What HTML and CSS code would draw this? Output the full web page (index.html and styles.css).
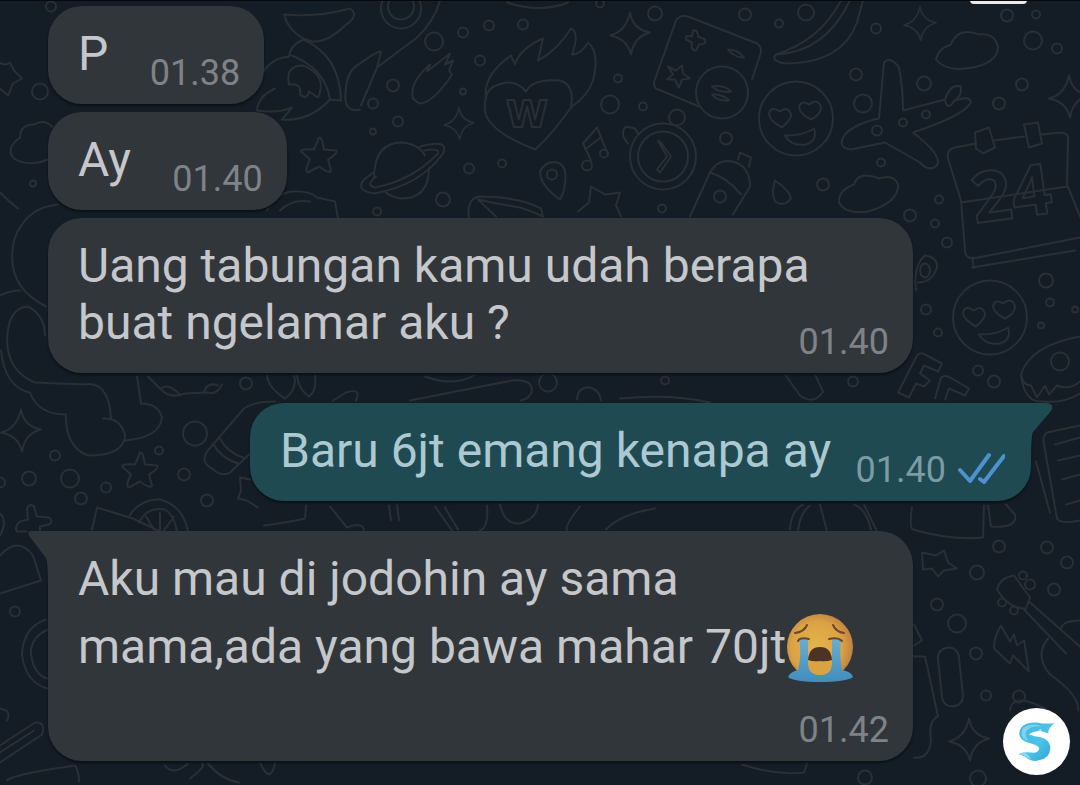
FILE: index.html
```html
<!DOCTYPE html>
<html lang="id">
<head>
<meta charset="utf-8">
<meta name="viewport" content="width=device-width, initial-scale=1">
<title>Chat</title>
<link rel="stylesheet" href="styles.css">
</head>
<body>
<svg class="wallpaper" viewBox="0 0 1080 785" preserveAspectRatio="xMidYMid slice" aria-hidden="true">
  <defs>
    <path id="star" d="M0-18 Q3-19 5-6 L17-5 Q20-3 9 4 L12 15 Q11 19 0 11 L-11 17 Q-15 16-9 4 L-18-4 Q-18-7-5-6Z"/>
    <path id="spark" d="M0-21 Q3-4 20-1 Q4 3 1 21 Q-3 5-20 2 Q-4-2 0-21Z"/>
    <g id="love">
      <circle r="37"/>
      <path d="M-14 9 Q-27 2-27-5 Q-25-13-16-7 Q-8-13-5-4 Q-4 0-14 9Z M15 1 Q3-5 3-12 Q6-19 13-14 Q22-21 25-11 Q25-4 15 1Z M-11 17 Q8 17 18 10 Q22 22 10 26 Q-5 28-11 17Z"/>
    </g>
    <g id="clock"><circle r="33"/><circle r="25"/><path d="M-5-16 L4 0 L-6 13 L-3 16 L8 0 L-2-14Z"/></g>
  </defs>
  <g class="doodles">
    <!-- top left -->
    <path d="M0 62 Q5 66 10 62 L14 70 L22 78 L13 83 L8 95 L0 88"/>
    <path d="M52 126 Q44 118 34 124 Q20 124 20 137 Q5 148 14 158 Q28 167 48 159"/>
    <path d="M0 192 Q9 201 18 208 M58 204 Q25 207 14 240 Q4 285 46 306"/>
    <path d="M284 14 Q318 17 350 8 Q360 15 345 25 Q328 42 312 41 Q290 35 284 14Z"/>
    <path d="M303 39 Q290 45 289 56 Q270 58 262 74 M303 39 Q340 55 341 100 L330 99 Q325 67 289 54 M330 99 Q310 121 282 119 L292 107 Q278 113 257 110 Q258 96 275 88 L262 96"/>
    <path d="M303 65 Q285 65 289 84 Q302 82 300 94 Q307 100 309 91 L318 97 Q328 75 303 65Z"/>
    <path d="M360 109 Q342 113 346 88 Q347 70 360 63 Q378 50 381 51 L377 67 Q402 48 416 38 Q435 20 440 0 M377 67 L361 105"/>
    <use href="#star" x="319" y="155"/>
    <path d="M267 210 Q275 193 292 191 Q310 190 317 197 L335 201 L338 218 M280 210 Q292 198 310 201"/>
    <circle cx="401" cy="8" r="20"/><circle cx="401" cy="6" r="13"/>
    <path d="M413 98 Q409 82 430 64 L427 71 L450 53 L445 64 L453 60 L449 70 L452 74 Q433 103 419 103Z M507 2 Q540 13 568 2"/>
    <use href="#spark" x="459" y="123" transform="translate(459 123) scale(.75) translate(-459 -123)"/>
    <!-- planet -->
    <path d="M374 178 Q374 142 402 142 Q418 143 425 155 M429 167 Q429 198 402 198 Q391 197 385 191"/>
    <path d="M420 146 Q450 138 443 153 Q420 185 374 193 Q355 190 364 179 L373 172 M424 150 Q440 147 438 153 Q412 180 375 187 Q365 185 376 176"/>
    <!-- burning heart -->
    <path d="M526 91 Q515 78 499 84 Q483 88 485 110 Q487 130 535 149 Q551 135 571 107 Q575 83 559 80 Q533 78 526 91Z"/>
    <path d="M486 99 Q482 75 511 55 L515 64 Q520 48 543 38 L538 60 Q557 50 571 28 Q580 32 572 54 Q581 54 588 42 Q600 52 593 80 Q588 95 572 106"/>
    <text class="doodle-heart" x="506" y="126">W</text>
    <use href="#spark" x="630" y="33"/>
    <path d="M583 143 L597 127 L608 154 M583 143 L591 160 M585 149 L601 137"/><circle cx="587" cy="165" r="5"/><circle cx="604" cy="153" r="4"/>
    <path d="M560 199 Q540 185 540 171 Q545 160 557 162 Q570 165 563 193Z"/><circle cx="552" cy="174" r="5"/>
    <path d="M469 218 Q466 200 478 196 Q520 196 541 208 L543 216 Q535 212 520 207 Q495 203 478 199 L496 216 M578 211 L589 202 L591 186 L605 194 L620 192 L616 205 L621 216"/>
    <!-- clock and calculator -->
    <use href="#clock" x="663" y="156"/><path d="M628 143 Q619 133 626 126 L635 128 L638 133"/>
    <path d="M699 106 L656 88 Q652 84 656 76 L676 20 Q680 14 688 16 L757 43 Q763 47 760 55 L752 79"/>
    <circle cx="722" cy="92" r="26"/>
    <path d="M693 30 Q698 29 698 36 L705 39 Q707 44 699 44 L696 50 Q690 50 692 42 L686 39 Q685 34 692 36Z M668 66 L676 70 L682 65 L683 73 L690 78 L682 79 L679 87 L675 79 L667 79 L673 74Z M728 49 Q738 49 744 57 Q734 57 728 49Z M712 86 Q724 84 731 91 Q720 93 712 86Z M712 94 Q722 93 729 100 Q717 101 712 94Z"/>
    <!-- banana, bottle -->
    <path d="M841 0 Q820 40 776 54 Q770 60 785 63 Q842 63 857 22 L863 0 M776 54 Q825 52 850 0"/>
    <path d="M690 216 L710 172 Q718 158 732 161 Q750 165 750 186 L733 214 M710 172 Q726 176 741 194 M738 159 L740 152 L751 157 L749 166"/><circle cx="720" cy="196" r="6"/>
    <use href="#love" x="796" y="118"/>
    <path d="M775 180 Q790 190 791 198 Q784 207 775 201 Q771 193 775 180Z"/>
    <!-- plane -->
    <path d="M879 118 L884 62 Q890 55 899 67 Q903 88 903 110 L945 99 Q950 83 961 86 Q962 97 953 101 Q970 94 971 102 Q964 115 913 132 Q943 155 937 165 Q929 172 920 162 L885 142 L851 149 Q836 147 845 134 Q855 123 879 118Z"/>
    <path d="M954 101 Q947 111 945 99"/>
    <path d="M951 44 Q938 48 936 59 Q946 72 973 67 Q997 62 998 47 Q995 32 979 34 Q958 26 951 44Z"/>
    <path d="M854 184 Q838 190 839 202 Q845 214 868 211 Q899 202 898 184 Q894 173 879 178 Q858 170 854 184Z"/>
    <use href="#spark" x="920" y="23" transform="translate(920 23) scale(.8) translate(-920 -23)"/>
    <use href="#spark" x="1069" y="96"/>
    <!-- calendar -->
    <path d="M976 143 L955 147 Q946 149 948 158 L961 200 L965 250 Q965 260 978 257 L1080 237 M994 140 L1024 136 M1041 134 L1062 132 Q1069 133 1068 140 L1067 184 L1080 216 M961 202 L1067 186 M972 267 L1075 250 M974 267 Q972 260 973 257"/>
    <path d="M975 132 L989 127 L995 147 L983 153 L976 148Z M1024 124 L1038 122 L1042 143 L1029 147Z"/>
    <text class="doodle-date" x="975" y="223" transform="rotate(-8 975 223)">24</text>
    <!-- right middle -->
    <path d="M916 290 Q913 265 925 255 Q938 257 937 267 Q932 282 918 282"/><ellipse cx="925" cy="270" rx="5" ry="7"/>
    <use href="#love" x="990" y="317"/>
    <path d="M1080 336 Q1030 345 1021 374 Q1023 385 1031 385 L1037 397 L1045 385 L1049 394 L1057 385 Q1070 390 1080 381 M1021 374 Q1024 402 1042 401 Q1064 403 1080 393"/><circle cx="1060" cy="361" r="9"/>
    <path d="M898 392 L917 355 Q920 351 925 354 L942 363 L938 371 L924 365 L920 373 L930 380 L924 386 L916 383 L909 397Z M935 398 L941 377 Q945 374 950 377 L969 388 L965 395 L949 388 L945 399"/>
    <path d="M1080 425 L1047 432 Q1042 436 1044 444 L1057 518 Q1060 524 1080 520 M1036 461 L1050 512 M1055 444 L1080 437 M1058 460 L1080 455 M1062 479 L1080 474 M1066 504 L1080 500"/>
    <!-- middle strip -->
    <path d="M267 375 Q268 387 285 398 Q298 388 294 375 M297 375 Q298 388 309 396 Q317 390 315 375 M333 400 L346 392 Q362 387 356 400 M410 400 L512 380 Q532 378 532 390 Q530 398 521 400 M425 376 Q455 387 475 374 M577 399 Q578 386 590 387 Q600 390 601 400 M620 398 Q670 393 710 402 M785 374 L800 395 Q814 405 823 391 L815 374"/>
    <path d="M264 525 Q287 522 305 518 L306 505 M330 506 L347 527 Q363 521 364 530 M389 505 L391 520 M397 504 L399 520 M435 506 L452 530 M445 507 L458 529 M487 505 Q489 526 480 530 M500 504 Q504 524 520 523 Q537 518 538 504 M580 506 Q564 526 567 530 M606 529 Q622 513 655 508 M790 529 Q791 510 803 504 M798 530 Q800 512 810 505 M820 504 L827 531 M854 504 Q866 508 871 529 M864 504 L877 531 M912 507 Q909 527 913 529 Q950 540 983 537 L984 505 M988 505 L991 526 Q1018 528 1015 514 L1006 504"/>
    <!-- left middle -->
    <path d="M0 295 Q10 290 20 290 M28 306 Q8 307 7 340 Q8 371 35 382 L84 384 Q109 380 111 418 M28 306 Q45 315 45 335 M1 350 Q5 387 30 392 Q38 414 66 414 Q65 446 88 455 Q125 455 125 434 Q120 417 103 418 M125 440 Q160 437 162 417 Q158 403 141 403 L137 376"/>
    <path d="M148 376 L160 388 Q170 399 185 393 L207 392 Q217 395 222 384 M161 388 Q168 382 180 394 M204 391 Q208 381 218 385"/>
    <path d="M275 401 Q254 401 244 408 L207 451 Q200 462 212 468 Q222 477 230 472 L250 453 M213 443 Q220 457 238 463 M220 438 Q227 452 243 457 M250 479 L240 477 L241 490 L238 498 L247 500 L258 507"/>
    <use href="#spark" x="21" y="430"/><use href="#star" x="140" y="470"/>
    <path d="M27 531 L17 531 Q14 526 20 521 L28 519 L27 508 Q30 502 34 506 L37 516 L49 517 Q54 521 49 524 L40 526 V531 M92 529 L97 507 L133 518 M129 516 Q140 498 160 499 Q183 505 188 531 M139 522 Q147 506 165 509 Q174 514 177 531 M154 529 L146 516 M160 530 V512 M164 530 L174 516 M133 518 L158 530"/>
    <!-- bottom left -->
    <path d="M0 513 Q8 521 0 535 M0 555 Q18 535 33 555 L41 580 L0 593 M46 619 Q23 627 22 654 Q25 681 47 688 M48 629 Q30 637 31 654 Q34 674 47 678 M0 708 Q12 710 7 720"/>
    <path d="M0 745 L35 722 Q46 721 42 734 L0 762 M0 752 L34 730 M7 780 Q12 774 75 765 Q79 771 79 781 M165 765 Q173 776 188 763 M190 778 Q207 765 202 763 M208 763 Q221 779 239 782 M260 762 Q270 785 275 763"/>
    <!-- bottom right -->
    <path d="M922 552 L936 555 L944 550 L948 562 L957 568 L944 570 L938 576 L932 568 L923 569Z"/>
    <path d="M997 589 Q1000 577 1014 575 L1030 597 L1026 608 Q1008 608 997 589Z M1030 602 L1080 646 M1024 609 L1066 653 M1080 620 Q1063 620 1061 628 M1048 638 Q1034 655 1050 674 Q1080 695 1078 710"/>
    <circle cx="1023" cy="575" r="4"/><circle cx="1030" cy="584" r="5"/><circle cx="1002" cy="602" r="4"/><circle cx="1014" cy="610" r="4"/>
    <path d="M1001 625 Q994 636 994 648 L1010 663 L1013 655 L1029 671 L1024 640 L1017 645 L1014 634 L1010 641Z"/>
    <rect x="940" y="647" width="21" height="59" rx="10" transform="rotate(-6 950 677)"/>
    <path d="M913 656 L925 656 L938 716 Q928 720 931 740 Q929 759 914 757 M914 624 L922 640 L914 645"/>
    <path d="M1010 710 Q1012 691 1045 708"/><circle cx="1019" cy="696" r="6"/>
    <use href="#spark" x="969" y="739"/>
    <path d="M742 764 Q775 775 804 772 L807 763"/>
    <!-- loose bubbles -->
    <circle cx="40" cy="91" r="8"/><circle cx="51" cy="6" r="5"/><circle cx="33" cy="183" r="3"/>
    <circle cx="434" cy="41" r="9"/><circle cx="463" cy="32" r="5"/><circle cx="489" cy="25" r="5"/><circle cx="523" cy="24" r="5"/><circle cx="480" cy="60" r="5"/><circle cx="393" cy="85" r="6"/><circle cx="373" cy="103" r="5"/><circle cx="463" cy="91" r="3"/><circle cx="398" cy="121" r="5"/><circle cx="373" cy="131" r="3"/><circle cx="469" cy="168" r="5"/><circle cx="502" cy="163" r="4"/><circle cx="443" cy="199" r="7"/><circle cx="377" cy="211" r="4"/>
    <circle cx="655" cy="13" r="7"/><circle cx="600" cy="3" r="4"/><circle cx="610" cy="104" r="9"/><circle cx="643" cy="106" r="4"/><circle cx="618" cy="78" r="4"/><circle cx="677" cy="117" r="8"/><circle cx="662" cy="208" r="4"/>
    <circle cx="745" cy="14" r="6"/><circle cx="779" cy="23" r="4"/><circle cx="806" cy="12" r="8"/><circle cx="876" cy="28" r="5"/><circle cx="856" cy="74" r="6"/><circle cx="863" cy="103" r="9"/><circle cx="924" cy="83" r="7"/><circle cx="877" cy="130" r="5"/><circle cx="903" cy="122" r="4"/><circle cx="926" cy="114" r="4"/><circle cx="881" cy="162" r="4"/><circle cx="823" cy="184" r="6"/><circle cx="726" cy="138" r="6"/>
    <circle cx="1007" cy="15" r="6"/><circle cx="1036" cy="14" r="4"/><circle cx="1033" cy="40" r="9"/><circle cx="1057" cy="48" r="5"/><circle cx="1022" cy="84" r="6"/><circle cx="999" cy="103" r="6"/><circle cx="939" cy="199" r="4"/><circle cx="910" cy="215" r="6"/><circle cx="935" cy="223" r="4"/><circle cx="947" cy="242" r="5"/>
    <circle cx="926" cy="309" r="5"/><circle cx="938" cy="332" r="4"/><circle cx="1046" cy="280" r="7"/><circle cx="1050" cy="302" r="4"/><circle cx="1041" cy="325" r="3"/><circle cx="1075" cy="309" r="3"/><circle cx="978" cy="370" r="5"/><circle cx="994" cy="381" r="6"/>
    <circle cx="246" cy="383" r="6"/><circle cx="548" cy="382" r="9"/><circle cx="665" cy="380" r="4"/><circle cx="853" cy="381" r="5"/>
    <circle cx="195" cy="433" r="12"/><circle cx="55" cy="455" r="5"/><circle cx="29" cy="478" r="7"/><circle cx="70" cy="478" r="9"/><circle cx="106" cy="487" r="5"/><circle cx="81" cy="498" r="6"/><circle cx="159" cy="450" r="4"/><circle cx="184" cy="474" r="6"/><circle cx="207" cy="500" r="6"/><circle cx="0" cy="482" r="5"/>
    <circle cx="15" cy="611" r="5"/><circle cx="999" cy="546" r="6"/><circle cx="1047" cy="547" r="6"/><circle cx="977" cy="572" r="7"/><circle cx="937" cy="604" r="6"/><circle cx="957" cy="623" r="9"/><circle cx="1054" cy="589" r="6"/><circle cx="1067" cy="562" r="6"/><circle cx="976" cy="653" r="6"/><circle cx="986" cy="695" r="5"/><circle cx="865" cy="777" r="7"/><circle cx="978" cy="778" r="8"/>
  </g>
</svg>

<main class="chat">
  <article class="bubble incoming">
    <p class="message">P <span class="spacer"></span></p>
    <time class="stamp">01.38</time>
  </article>
  <article class="bubble incoming">
    <p class="message">Ay <span class="spacer"></span></p>
    <time class="stamp">01.40</time>
  </article>
  <article class="bubble incoming">
    <p class="message">Uang tabungan kamu udah berapa buat ngelamar aku ? <span class="spacer"></span></p>
    <time class="stamp">01.40</time>
  </article>
  <article class="bubble outgoing">
    <svg class="tail" viewBox="0 0 56 60" aria-hidden="true"><path d="M0 0 H49 Q57 1 53 8 L35 29 Q33 32 33 60 H0Z"/></svg>
    <p class="message">Baru 6jt emang kenapa ay <span class="spacer"></span></p>
    <div class="meta">
      <time class="stamp">01.40</time>
      <svg class="ticks" viewBox="0 0 48 36" role="img" aria-label="Dibaca"><path d="M3 20 L13 31 L32 5 M23 29 L27 32 L47 6"/></svg>
    </div>
  </article>
  <article class="bubble incoming first">
    <svg class="tail" viewBox="0 0 56 60" aria-hidden="true"><path d="M50 0 H3 Q-2 1 2 6 L18 27 Q20 30 20 60 H50Z"/></svg>
    <p class="message">Aku mau di jodohin ay sama mama,ada yang bawa mahar 70jt<svg class="emoji" viewBox="0 0 68 68" role="img" aria-label="Menangis keras">
      <defs>
        <radialGradient id="face" cx=".45" cy=".5" r=".55"><stop offset="0" stop-color="#e5b44a"/><stop offset=".7" stop-color="#dba246"/><stop offset="1" stop-color="#c08140"/></radialGradient>
        <linearGradient id="tear" x2="0" y2="1"><stop offset="0" stop-color="#6aaed0"/><stop offset="1" stop-color="#428dbd"/></linearGradient>
      </defs>
      <circle cx="34" cy="33" r="33" fill="url(#face)"/>
      <path d="M13 25 H22 V50 Q23 61 34 61 Q45 61 46 50 V25 H55 Q53 40 56 56 Q66 58 67 63 Q60 68 34 68 Q8 68 2 63 Q4 58 12 56 Q16 40 13 25Z" fill="url(#tear)"/>
      <path d="M23 51 Q24 46 34 46 Q44 46 45 51 V54 Q43 61 34 61 Q25 61 23 54Z" fill="#d9a343"/>
      <path d="M22 46 Q23 33 34 33 Q45 33 46 46 Q40 48 34 47 Q27 48 22 46Z" fill="#4b3326"/>
      <path d="M9 19 Q18 18 21 11 M47 11 Q50 18 58 19 M12 27 Q14 23 23 25 M43 25 Q52 23 56 27" fill="none" stroke="#6c4728" stroke-width="2" stroke-linecap="round"/>
    </svg> <span class="spacer"></span></p>
    <time class="stamp">01.42</time>
  </article>
</main>

<div class="notch" aria-hidden="true"></div>
<div class="watermark">
  <svg viewBox="0 0 200 200" role="img" aria-label="Logo">
    <defs><linearGradient id="dolphin" x2="1" y2="1"><stop offset="0" stop-color="#3fb6e0"/><stop offset=".55" stop-color="#4cc4e8"/><stop offset="1" stop-color="#2a9fd4"/></linearGradient></defs>
    <path d="M154 45 Q128 49 100 43 Q65 43 54 59 Q43 78 54 91 Q63 101 84 106 Q108 113 108 121 Q106 136 82 133 Q64 129 46 138 Q66 143 76 153 Q92 161 107 156 Q140 151 141 121 Q142 102 123 91 Q112 85 94 84 L78 79 Q88 70 112 68 L135 76 Q135 59 154 45Z" fill="url(#dolphin)"/>
    <path d="M60 58 Q88 42 116 55 Q82 51 69 70 Q65 82 75 98 Q46 88 60 58Z" fill="#7fd3ec"/>
    <path d="M77 79 Q96 70 124 82 L100 80Z M104 66 L116 64 L112 68Z" fill="#fff"/>
    <path d="M47 138 Q72 123 83 155 Q73 144 47 138Z" fill="#84dcf0"/>
  </svg>
</div>
</body>
</html>
```
FILE: styles.css
```css
* {
  box-sizing: border-box;
}

body {
  position: relative;
  min-height: 100vh;
  margin: 0;
  overflow-x: hidden;
  background: #141c26;
  border-top: 1px solid #05080c;
  font-family: Roboto, "Noto Sans", sans-serif;
}

.wallpaper {
  position: absolute;
  inset: 0;
  z-index: -1;
  width: 100%;
  height: 100%;
}

.doodles {
  fill: none;
  stroke: #292f34;
  stroke-width: 2;
  stroke-linecap: round;
  stroke-linejoin: round;
}

.doodle-heart {
  font: 700 38px "DejaVu Sans", sans-serif;
}

.doodle-date {
  font: 700 70px "Open Sans", sans-serif;
}

.chat {
  display: flex;
  flex-direction: column;
  align-items: flex-start;
  gap: 8px;
  padding: 5px 49px 23px 48px;
}

.bubble {
  position: relative;
  display: grid;
  max-width: 88%;
  padding: 0 24px 0 30px;
  border-radius: 34px;
  box-shadow: 0 2px 2px #0c1117;
}

.incoming {
  background: #31363a;
  color: #c5c7ca;
  --tail: #31363a;
  --stamp: #7f8388;
}

.outgoing {
  align-self: flex-end;
  margin: 22px 0;
  border-top-right-radius: 0;
  background: #1f4a52;
  color: #acc9d1;
  --tail: #1f4a52;
  --stamp: #7b9ca2;
}

.first {
  border-top-left-radius: 0;
}

.message {
  position: relative;
  grid-area: 1 / 1;
  margin: 0;
  padding: 19px 0 22px;
  font-size: 48px;
  line-height: 57px;
}

.spacer {
  display: inline-block;
  width: 120px;
}

.outgoing .spacer {
  width: 164px;
}

.meta {
  position: relative;
  display: flex;
  align-items: flex-end;
  gap: 11px;
  margin-right: 2px;
}

.stamp,
.meta {
  grid-area: 1 / 1;
  align-self: end;
  justify-self: end;
}

.stamp {
  padding-bottom: 10px;
  color: var(--stamp);
  font-size: 36px;
  line-height: 42px;
}

.ticks {
  flex: none;
  width: 48px;
  height: 36px;
  margin-bottom: 15px;
  fill: none;
  stroke: #4c92cf;
  stroke-width: 4;
  stroke-linecap: round;
  stroke-linejoin: round;
}

.tail {
  position: absolute;
  top: 0;
  width: 56px;
  height: 60px;
  fill: var(--tail);
}

.outgoing .tail {
  right: -23px;
}

.first .tail {
  left: -20px;
}

.emoji {
  width: 68px;
  height: 68px;
  margin-top: 7px;
  vertical-align: -19px;
}

.notch {
  position: absolute;
  top: -1px;
  right: 53px;
  width: 57px;
  height: 4px;
  border-radius: 0 0 8px 8px;
  background: #e8eaee;
}

.watermark {
  position: absolute;
  right: 10px;
  bottom: 10px;
  display: flex;
  width: 67px;
  height: 67px;
  border-radius: 50%;
  background: #fff;
}
```
